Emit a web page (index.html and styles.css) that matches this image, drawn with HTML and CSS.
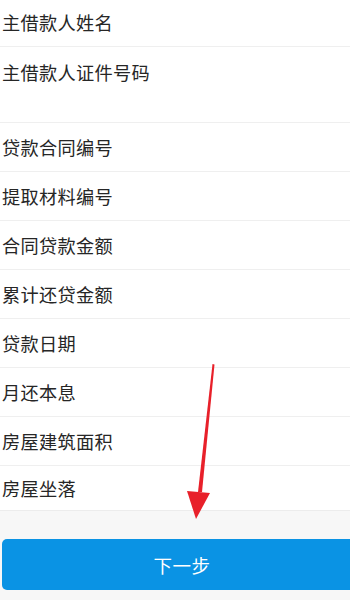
FILE: index.html
```html
<!DOCTYPE html>
<html lang="zh-CN">

<head>
    <meta charset="UTF-8">
    <meta name="viewport" content="width=device-width, initial-scale=1.0">
    <title>贷款信息</title>
    <link rel="stylesheet" href="styles.css">
</head>

<body>
    <!-- loan info form -->
    <ul class="form-list">
        <li class="first">主借款人姓名</li>
        <li class="tall">主借款人证件号码</li>
        <li>贷款合同编号</li>
        <li>提取材料编号</li>
        <li>合同贷款金额</li>
        <li>累计还贷金额</li>
        <li>贷款日期</li>
        <li>月还本息</li>
        <li>房屋建筑面积</li>
        <li class="last">房屋坐落</li>
    </ul>

    <div class="footer">
        <button class="next-btn">下一步</button>
    </div>

    <!-- red hint arrow drawn over the list -->
    <svg class="hint-arrow" width="40" height="170" viewBox="0 0 40 170">
        <path d="M35.5 14 L37.5 14.5 L25 142 L21 142 Z" fill="#e8202a" />
        <path d="M10 141 L33 143 L19 169 Z" fill="#e8202a" />
    </svg>
</body>

</html>
```

FILE: styles.css
```css
* {
    box-sizing: border-box;
}

body {
    margin: 0;
    width: 350px;
    height: 600px;
    overflow: hidden;
    position: relative;
    background-color: #f7f7f7;
    font-family: "Noto Sans CJK SC", "Noto Sans", sans-serif;
}

.form-list {
    list-style-type: none;
    margin: 0;
    padding: 0;
    background-color: #fff;
}

.form-list li {
    height: 49px;
    padding-left: 2px;
    line-height: 48px;
    border-bottom: 1px solid #efefef;
    font-size: 18.2px;
    letter-spacing: 0.3px;
    color: #262626;
}

.form-list li.first {
    height: 46.5px;
    line-height: 45px;
}

.form-list li.tall {
    height: 76.5px;
    padding-top: 1px;
    line-height: 48px;
}

.form-list li.last {
    height: 45px;
    line-height: 45px;
    border-bottom-color: #ececec;
}

.footer {
    padding: 28px 0 0 2px;
}

/* button runs on past the right edge in the screenshot */
.next-btn {
    display: block;
    width: 348px;
    height: 51px;
    padding-left: 18px;
    border: none;
    border-radius: 5px 0 0 5px;
    background-color: #0a93e4;
    color: #fff;
    font-family: inherit;
    font-size: 18.5px;
    letter-spacing: 0.5px;
}

.hint-arrow {
    position: absolute;
    left: 177px;
    top: 350px;
}
```
